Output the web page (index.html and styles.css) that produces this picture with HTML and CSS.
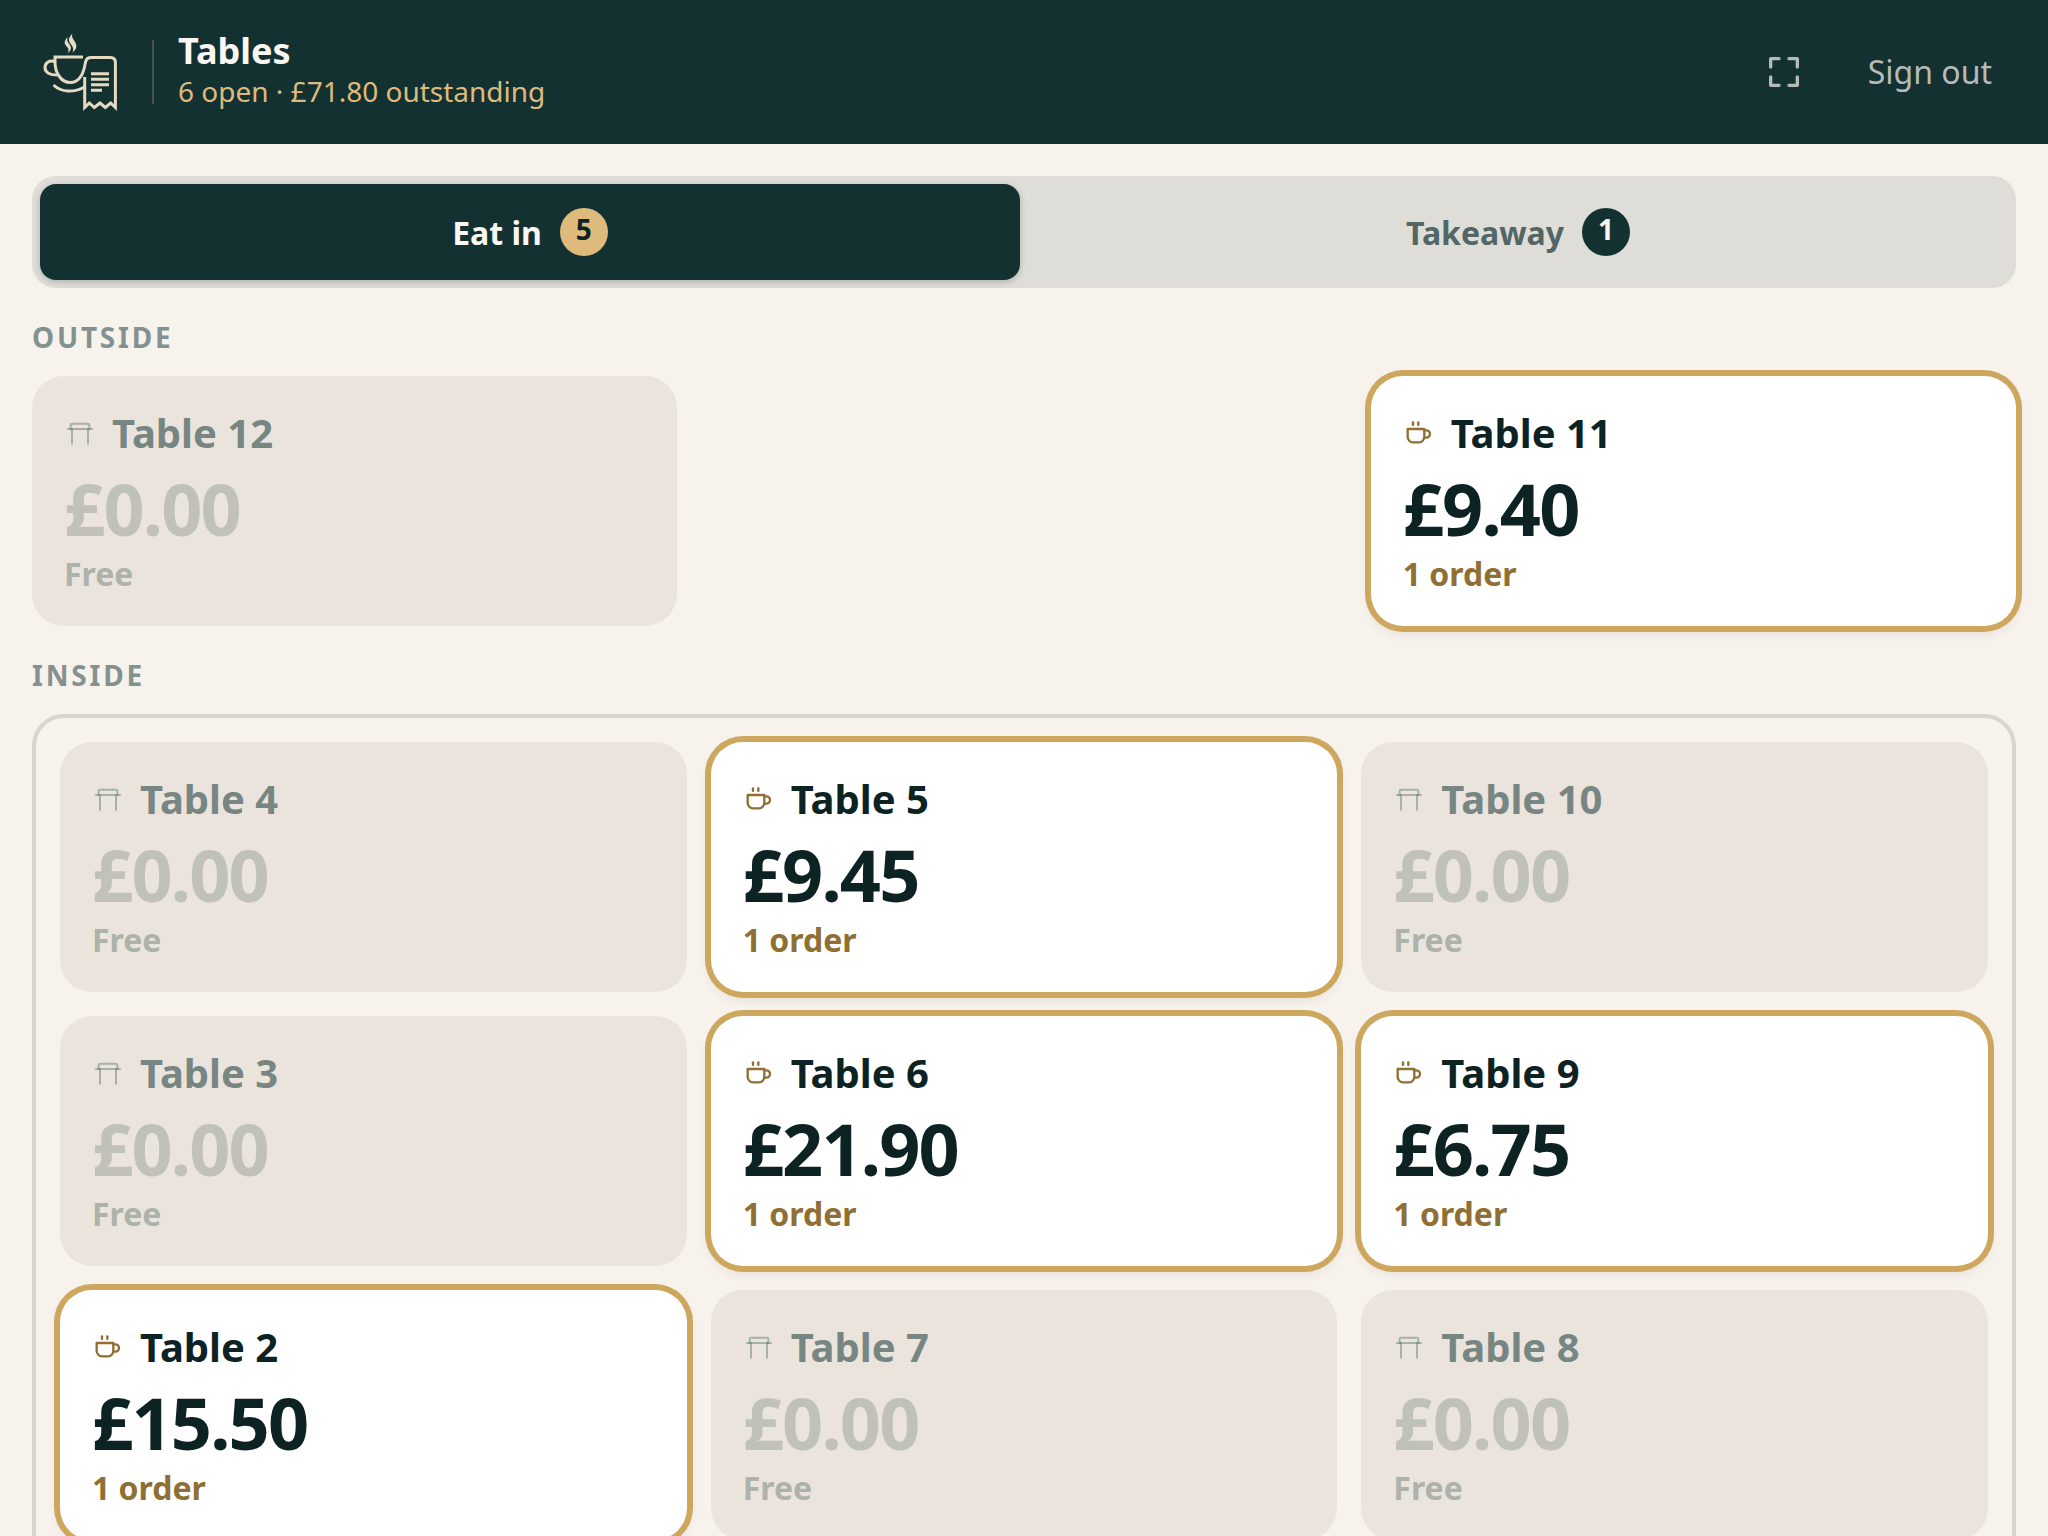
FILE: index.html
```
<!DOCTYPE html>
<html lang="en">

<head>
    <meta charset="UTF-8">
    <meta name="viewport" content="width=device-width, initial-scale=1.0">
    <title>Tables</title>
    <link rel="stylesheet" href="styles.css">
</head>

<body>
    <!-- Shared icons -->
    <svg class="sprite" aria-hidden="true">
        <symbol id="icon-table" viewBox="0 0 24 24">
            <path d="M3 9h18" />
            <path d="M5 9V6a1 1 0 0 1 1-1h12a1 1 0 0 1 1 1v3" />
            <path d="M6 9v11" />
            <path d="M18 9v11" />
        </symbol>
        <symbol id="icon-cup" viewBox="0 0 24 24">
            <path d="M3.5 9h12.5v6a4 4 0 0 1-4 4H7.5a4 4 0 0 1-4-4z" />
            <path d="M16 10h1.5a2.5 2.5 0 0 1 0 5.500H16" />
            <path d="M7.5 4v2" />
            <path d="M11.5 4v2" />
        </symbol>
    </svg>

    <header class="topbar">
        <svg class="logo" viewBox="0 0 96 96" aria-hidden="true">
            <path d="M51 33H23v5c0 12 7 20.500 15 20.500S50.500 52 52.500 43c1-6 1.500-9.500 6.500-9.500h19.400q5 0 5 5V83.500l-4.700-4.500-5.400 4.500L68 79l-5.700 4.500-5-4.500-4.600 4.500V53" />
            <path d="M22.500 37.500C17 36 13 39 13 43.500c0 5 5 7.500 12 7.500" />
            <path d="M21.500 61c8 7.500 20 8 31 2" />
            <path d="M59 49.700h18M59 55.200h18M59 60.700h18M59 66.300h11" />
            <path class="steam" d="M36 13c-4.500 4-4 7-.8 10 1.800 2 1.500 4 .3 6.300 4-3 4.500-6 1.500-9.500-2-2.500-2.200-4-1-6.800z" />
            <path class="steam" d="M40.500 9.500c-4.500 4.500-4.500 7.500-1 11.500 2 2.500 2 5 1 7.500 4.500-3.500 5-7 2-11.500-2-3-3.200-4.500-2-7.500z" />
        </svg>
        <div class="heading">
            <h1>Tables</h1>
            <p>6 open · £71.80 outstanding</p>
        </div>
        <div class="actions">
            <button class="action" type="button" aria-label="Full screen">
                <svg class="fullscreen" viewBox="0 0 24 24" aria-hidden="true">
                    <path d="M4 9V4h5M15 4h5v5M20 15v5h-5M9 20H4v-5" />
                </svg>
            </button>
            <button class="action" type="button">Sign out</button>
        </div>
    </header>

    <main>
        <div class="tabs" role="tablist">
            <button class="tab active" type="button" role="tab" aria-selected="true">Eat in <span class="count">5</span></button>
            <button class="tab" type="button" role="tab" aria-selected="false">Takeaway <span class="count">1</span></button>
        </div>

        <h2>Outside</h2>
        <div class="grid">
            <button class="card" type="button">
                <span class="name"><svg class="icon"><use href="#icon-table" /></svg>Table 12</span>
                <span class="price">£0.00</span>
                <span class="state">Free</span>
            </button>
            <button class="card open last-col" type="button">
                <span class="name"><svg class="icon"><use href="#icon-cup" /></svg>Table 11</span>
                <span class="price">£9.40</span>
                <span class="state">1 order</span>
            </button>
        </div>

        <h2>Inside</h2>
        <div class="grid room">
            <button class="card" type="button">
                <span class="name"><svg class="icon"><use href="#icon-table" /></svg>Table 4</span>
                <span class="price">£0.00</span>
                <span class="state">Free</span>
            </button>
            <button class="card open" type="button">
                <span class="name"><svg class="icon"><use href="#icon-cup" /></svg>Table 5</span>
                <span class="price">£9.45</span>
                <span class="state">1 order</span>
            </button>
            <button class="card" type="button">
                <span class="name"><svg class="icon"><use href="#icon-table" /></svg>Table 10</span>
                <span class="price">£0.00</span>
                <span class="state">Free</span>
            </button>
            <button class="card" type="button">
                <span class="name"><svg class="icon"><use href="#icon-table" /></svg>Table 3</span>
                <span class="price">£0.00</span>
                <span class="state">Free</span>
            </button>
            <button class="card open" type="button">
                <span class="name"><svg class="icon"><use href="#icon-cup" /></svg>Table 6</span>
                <span class="price">£21.90</span>
                <span class="state">1 order</span>
            </button>
            <button class="card open" type="button">
                <span class="name"><svg class="icon"><use href="#icon-cup" /></svg>Table 9</span>
                <span class="price">£6.75</span>
                <span class="state">1 order</span>
            </button>
            <button class="card open" type="button">
                <span class="name"><svg class="icon"><use href="#icon-cup" /></svg>Table 2</span>
                <span class="price">£15.50</span>
                <span class="state">1 order</span>
            </button>
            <button class="card" type="button">
                <span class="name"><svg class="icon"><use href="#icon-table" /></svg>Table 7</span>
                <span class="price">£0.00</span>
                <span class="state">Free</span>
            </button>
            <button class="card" type="button">
                <span class="name"><svg class="icon"><use href="#icon-table" /></svg>Table 8</span>
                <span class="price">£0.00</span>
                <span class="state">Free</span>
            </button>
        </div>
    </main>
</body>

</html>
```
FILE: styles.css
```
* {
    box-sizing: border-box;
}

body {
    margin: 0;
    height: 100vh;
    display: flex;
    flex-direction: column;
    font-family: "Noto Sans", sans-serif;
    background-color: #f7f2eb;
    color: #0d2223;
}

button {
    font-family: inherit;
    border: none;
    cursor: pointer;
}

h1,
h2,
p {
    margin: 0;
}

.sprite {
    display: none;
}

/* Header */
.topbar {
    display: flex;
    align-items: center;
    gap: 24px;
    padding: 24px 32px;
    background-color: #143132;
}

.logo {
    width: 96px;
    height: 96px;
    fill: none;
    stroke: #e6dac0;
    stroke-width: 3;
}

.logo .steam {
    fill: #e6dac0;
    stroke: none;
}

.heading {
    display: flex;
    flex-direction: column;
    justify-content: center;
    height: 64px;
    padding-left: 24px;
    border-left: 2px solid #45544a;
}

.heading h1 {
    font-size: 36px;
    line-height: 38px;
    color: #faf7f2;
}

.heading p {
    font-size: 28px;
    line-height: 42px;
    color: #debb7c;
}

.actions {
    display: flex;
    align-items: center;
    gap: 16px;
    margin-left: auto;
}

.action {
    display: flex;
    align-items: center;
    padding: 16px 24px;
    font-size: 32px;
    line-height: 48px;
    color: #b6bbb9;
    background: none;
}

.fullscreen {
    width: 40px;
    height: 40px;
    fill: none;
    stroke: currentColor;
    stroke-width: 2;
    stroke-linecap: round;
    stroke-linejoin: round;
}

main {
    flex: 1;
    min-height: 0;
    padding: 32px;
    overflow-y: auto;
    scrollbar-width: none;
}

/* Eat in / takeaway switch */
.tabs {
    display: grid;
    grid-template-columns: 1fr 1fr;
    gap: 8px;
    padding: 8px;
    background-color: #deddd8;
    border-radius: 24px;
}

.tab {
    display: flex;
    align-items: center;
    justify-content: center;
    gap: 18px;
    height: 96px;
    font-size: 32px;
    font-weight: 700;
    color: #526665;
    background: none;
    border-radius: 16px;
}

.tab.active {
    color: #faf7f2;
    background-color: #143132;
    box-shadow: 0 2px 6px rgba(0, 0, 0, 0.2);
}

.count {
    min-width: 48px;
    height: 48px;
    font-size: 28px;
    line-height: 42px;
    text-align: center;
    color: #faf7f2;
    background-color: #143132;
    border-radius: 24px;
}

.active .count {
    color: #0d2223;
    background-color: #debb7c;
}

h2 {
    margin: 28px 0 18px;
    font-size: 28px;
    line-height: 42px;
    font-weight: 700;
    letter-spacing: 0.1em;
    text-transform: uppercase;
    color: #839190;
}

/* Table cards */
.grid {
    display: grid;
    grid-template-columns: repeat(3, 1fr);
    gap: 24px;
}

.room {
    padding: 24px;
    border: 4px solid #d5d6d1;
    border-radius: 32px;
}

.card {
    display: flex;
    flex-direction: column;
    align-items: flex-start;
    padding: 32px;
    text-align: left;
    color: #788683;
    background-color: #ebe4dd;
    border-radius: 32px;
}

.card.open {
    color: #0d2223;
    background-color: #ffffff;
    box-shadow: 0 0 0 6px #cda75e, 0 6px 12px 2px rgba(20, 49, 50, 0.08);
}

.last-col {
    grid-column: 3;
}

.name {
    display: flex;
    align-items: center;
    gap: 16px;
    font-size: 40px;
    line-height: 50px;
    font-weight: 700;
}

.icon {
    width: 32px;
    height: 32px;
    fill: none;
    stroke: rgba(100, 125, 110, 0.5);
    stroke-width: 1.5;
    stroke-linecap: round;
    stroke-linejoin: round;
}

.open .icon {
    stroke: #8f6f33;
    stroke-width: 1.75;
}

.price {
    margin: 12px 0 8px;
    font-size: 72px;
    line-height: 76px;
    font-weight: 700;
    letter-spacing: -0.025em;
    color: #c0c2ba;
}

.open .price {
    color: #0d2223;
}

.state {
    font-size: 32px;
    line-height: 40px;
    font-weight: 700;
    color: #adb2aa;
}

.open .state {
    color: #8f6f33;
}
```
